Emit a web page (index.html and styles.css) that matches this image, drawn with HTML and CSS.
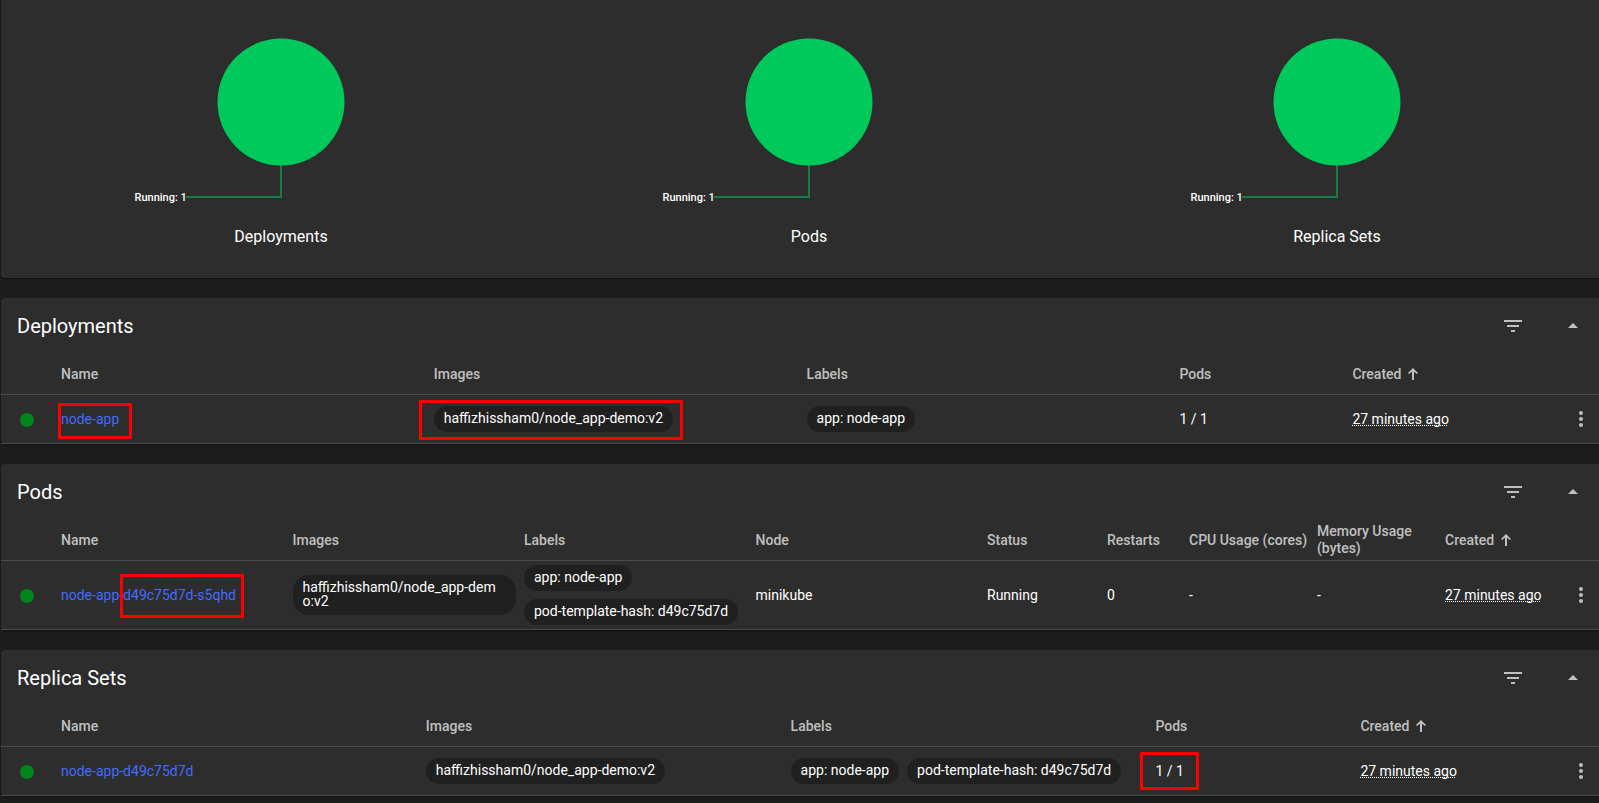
FILE: index.html
```html
<!DOCTYPE html>
<html lang="en">
<head>
<meta charset="utf-8">
<title>Workloads</title>
<link rel="stylesheet" href="styles.css">
</head>
<body>
<svg class="defs" width="0" height="0">
  <symbol id="filter" viewBox="0 0 24 24"><path d="M10 18h4v-2h-4v2zM3 6v2h18V6H3zm3 7h12v-2H6v2z"/></symbol>
  <symbol id="up" viewBox="0 0 24 24"><path d="M7 14l5-5 5 5z"/></symbol>
  <symbol id="more" viewBox="0 0 24 24"><circle cx="12" cy="6" r="2"/><circle cx="12" cy="12" r="2"/><circle cx="12" cy="18" r="2"/></symbol>
  <symbol id="sort" viewBox="0 0 12 12"><path d="M5 12V3.4L2.2 6.1 1 4.9 6 0l5 4.9-1.2 1.2L7 3.4V12z"/></symbol>
</svg>
<main class="page">
  <section class="card status">
    <figure class="chart"><svg class="pie" viewBox="0 0 528 210"><path class="leader" d="M264 165V197H169"/><circle class="slice" cx="264" cy="102" r="63.5"/><text class="pie-label" x="117.5" y="201">Running: 1</text></svg><figcaption>Deployments</figcaption></figure>
    <figure class="chart"><svg class="pie" viewBox="0 0 528 210"><path class="leader" d="M264 165V197H169"/><circle class="slice" cx="264" cy="102" r="63.5"/><text class="pie-label" x="117.5" y="201">Running: 1</text></svg><figcaption>Pods</figcaption></figure>
    <figure class="chart"><svg class="pie" viewBox="0 0 528 210"><path class="leader" d="M264 165V197H169"/><circle class="slice" cx="264" cy="102" r="63.5"/><text class="pie-label" x="117.5" y="201">Running: 1</text></svg><figcaption>Replica Sets</figcaption></figure>
  </section>

  <section class="card">
    <header class="card-head"><h2>Deployments</h2><svg class="icon"><use href="#filter"/></svg><svg class="icon"><use href="#up"/></svg></header>
    <div class="row head deployments"><span></span><span>Name</span><span>Images</span><span>Labels</span><span>Pods</span><span class="sorted">Created<svg class="sort"><use href="#sort"/></svg></span><span></span></div>
    <div class="row deployments">
      <span class="dot"></span>
      <span><a class="link">node-app</a></span>
      <span class="chips"><span class="chip">haffizhissham0/node_app-demo:v2</span></span>
      <span class="chips"><span class="chip">app: node-app</span></span>
      <span>1 / 1</span>
      <span><span class="age">27 minutes ago</span></span>
      <svg class="icon more"><use href="#more"/></svg>
      <i class="mark mark-name"></i><i class="mark mark-image"></i>
    </div>
  </section>

  <section class="card">
    <header class="card-head"><h2>Pods</h2><svg class="icon"><use href="#filter"/></svg><svg class="icon"><use href="#up"/></svg></header>
    <div class="row head pods"><span></span><span>Name</span><span>Images</span><span>Labels</span><span>Node</span><span>Status</span><span>Restarts</span><span>CPU Usage (cores)</span><span>Memory Usage (bytes)</span><span class="sorted">Created<svg class="sort"><use href="#sort"/></svg></span><span></span></div>
    <div class="row tall pods">
      <span class="dot"></span>
      <span><a class="link">node-app-d49c75d7d-s5qhd</a></span>
      <span class="chips"><span class="chip wrap">haffizhissham0/node_app-demo:v2</span></span>
      <span class="chips"><span class="chip">app: node-app</span><span class="chip">pod-template-hash: d49c75d7d</span></span>
      <span>minikube</span>
      <span>Running</span>
      <span>0</span>
      <span>-</span>
      <span>-</span>
      <span><span class="age">27 minutes ago</span></span>
      <svg class="icon more"><use href="#more"/></svg>
      <i class="mark mark-hash"></i>
    </div>
  </section>

  <section class="card">
    <header class="card-head"><h2>Replica Sets</h2><svg class="icon"><use href="#filter"/></svg><svg class="icon"><use href="#up"/></svg></header>
    <div class="row head replicas"><span></span><span>Name</span><span>Images</span><span>Labels</span><span>Pods</span><span class="sorted">Created<svg class="sort"><use href="#sort"/></svg></span><span></span></div>
    <div class="row replicas">
      <span class="dot"></span>
      <span><a class="link">node-app-d49c75d7d</a></span>
      <span class="chips"><span class="chip">haffizhissham0/node_app-demo:v2</span></span>
      <span class="chips"><span class="chip">app: node-app</span><span class="chip">pod-template-hash: d49c75d7d</span></span>
      <span>1 / 1</span>
      <span><span class="age">27 minutes ago</span></span>
      <svg class="icon more"><use href="#more"/></svg>
      <i class="mark mark-count"></i>
    </div>
  </section>
</main>
</body>
</html>
```
FILE: styles.css
```css
* { box-sizing: border-box; }

body {
  margin: 0;
  height: 803px;
  overflow: hidden;
  background: #1d1d1d;
  color: #fff;
  font: 14px/20px Roboto, "Liberation Sans", sans-serif;
}

.defs { display: block; }

.page {
  display: flex;
  flex-direction: column;
  gap: 20px;
  width: 1616px;
  margin-left: 1px;
}

.card {
  background: #2d2d2d;
  border-radius: 4px;
  box-shadow: 0 2px 1px -1px rgba(0, 0, 0, .2), 0 1px 1px rgba(0, 0, 0, .14), 0 1px 3px rgba(0, 0, 0, .12);
}

.status {
  display: grid;
  grid-template-columns: repeat(3, 528px);
  height: 278px;
  padding: 0 16px;
  border-radius: 0 0 4px 4px;
}

.chart { margin: 0; }
.pie { display: block; width: 528px; height: 210px; }
.slice { fill: #00c95c; }
.leader { fill: none; stroke: #177f46; stroke-width: 2; }
.pie-label { fill: #fff; font-size: 11px; font-weight: 500; }

figcaption {
  padding-top: 15px;
  font-size: 16px;
  line-height: 24px;
  text-align: center;
}

.card-head {
  display: flex;
  align-items: center;
  gap: 36px;
  height: 56px;
  padding: 0 32px 0 16px;
}

h2 {
  flex: 1;
  margin: 0;
  font-size: 20px;
  font-weight: 400;
}

.icon { width: 24px; height: 24px; fill: #c0c0c0; }

.row {
  position: relative;
  display: grid;
  align-items: center;
  height: 49px;
  border-bottom: 1px solid #4b4b4b;
}

.row.head { height: 41px; color: #c0c0c0; font-weight: 500; line-height: 17px; }
.row.tall { height: 69px; }

.deployments { grid-template-columns: 60px 372.8px 372.8px 372.8px 173px 215.6px 1fr; }
.pods { grid-template-columns: 60px 231.5px 231.5px 231.5px 231.5px 120px 82px 128px 128px 123px 1fr; }
.replicas { grid-template-columns: 60px 364.8px 364.8px 364.8px 205px 207.6px 1fr; }

.sorted { display: flex; align-items: center; gap: 6px; }
.sort { width: 12px; height: 12px; fill: #c0c0c0; }

.dot {
  width: 14px;
  height: 14px;
  margin: 2px 0 0 19px;
  border-radius: 50%;
  background: #00851a;
}

.link { color: #436bff; }

.chips { display: flex; flex-wrap: wrap; gap: 8px; }

.chip {
  padding: 5px 10px 7px;
  border-radius: 16px;
  background: #202020;
  line-height: 14px;
  white-space: nowrap;
}

.chip.wrap { width: 223px; padding-right: 16px; white-space: normal; word-break: break-all; }

.age {
  text-decoration: underline dotted 1px;
  text-underline-offset: 1px;
  text-decoration-skip-ink: none;
}

.more { margin-left: 1px; }

.mark { position: absolute; border: 3px solid #f00; border-radius: 1px; }
.mark-name { left: 57px; top: 8px; width: 74px; height: 36px; }
.mark-image { left: 418px; top: 5px; width: 264px; height: 40px; }
.mark-hash { left: 119px; top: 13px; width: 124px; height: 44px; }
.mark-count { left: 1139px; top: 5px; width: 59px; height: 38px; }
```
